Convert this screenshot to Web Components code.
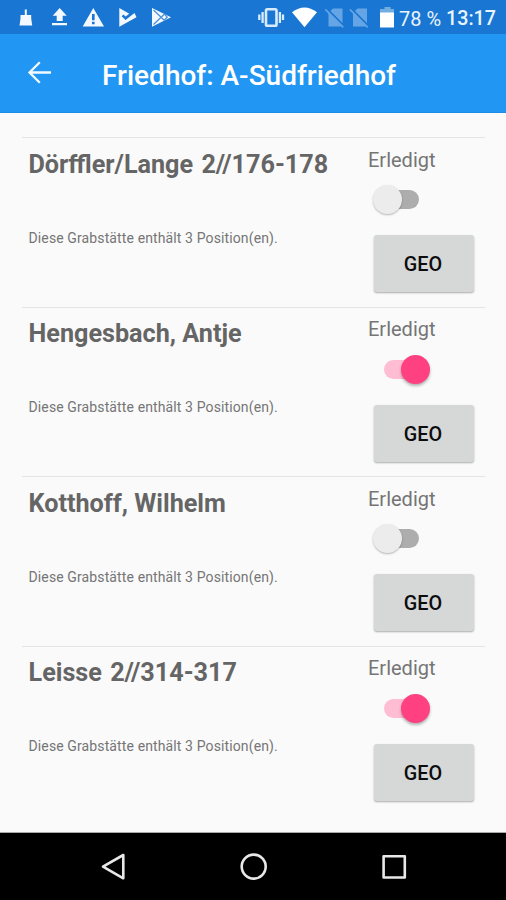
<!DOCTYPE html>
<html lang="de">
<head>
<meta charset="utf-8">
<title>Friedhof: A-Südfriedhof</title>
<style>
html, body { margin: 0; height: 100%; }
body { font-family: Roboto, "Liberation Sans", sans-serif; background: #fafafa; overflow: hidden; }
</style>
</head>
<body>
<grave-app></grave-app>
<script>
const define = (name, html, setup) => customElements.define(name, class extends HTMLElement {
  connectedCallback() {
    if (this.shadowRoot) return;
    const t = document.createElement('template');
    t.innerHTML = html;
    this.attachShadow({ mode: 'open' }).append(t.content.cloneNode(true));
    if (setup) setup(this, this.shadowRoot);
  }
});

define('status-bar', `
<style>
:host { display: flex; height: 34px; background: #1976d2; color: #e9f4ff; box-sizing: border-box; padding: 0 11px 0 0; justify-content: space-between; }
svg { display: block; flex: none; }
.right { display: flex; align-items: flex-start; font-size: 20px; line-height: 24px; white-space: pre; }
.pct { width: 47px; padding-top: 6.500px; }
.clock { font-weight: 500; font-size: 19.700px; width: 49px; padding-top: 6.500px; }
</style>
<svg width="180" height="34" viewBox="0 0 180 34" fill="#f3f9ff">
  <path d="M24.800 9.500h2V15h4.400v3.500l1 7h-12.700l1-7V15h4.300z"/>
  <path d="M59.700 8l7 7.700h-4V21h-6v-5.300h-4zM52 23h15v2.300H52z"/>
  <path fill-rule="evenodd" d="M93.300 8L104 26.500H82.700zM92 14v6.300h2.600v-6.300zM92 21.800V24.200h2.600v-2.400z"/>
  <path d="M119.300 8l10 5.700-3.800 2.800-2-2-1.800 1.800 3.800 3.800 9-7 2 4.200-17.200 9.400z"/>
  <path d="M152 8l19 9.200L152 26.700z"/>
  <path d="M153.500 10l11 10.500M153.500 24.500l11-10.500M164.500 14l2.700 3.200-2.700 2.800" fill="none" stroke="#4b91da" stroke-width="1.300"/>
</svg>
<div class="right">
<svg width="144" height="34" viewBox="255 0 144 34">
  <g fill="none" stroke="#d9ebff" stroke-width="2.300">
    <rect x="266" y="9.200" width="10.500" height="16.600" rx="1.300" stroke-width="2.600"/>
    <path d="M262.600 12v11M279.900 12v11M259.300 14.500v5.500M283 14.500v5.500"/>
  </g>
  <path fill="#fff" d="M292 12.300Q304.500 2.600 317 12.300L304.500 27.200z"/>
  <g fill="#65a5e5">
    <path d="M333 8.400h9.500V26.500h-14V13z"/><path d="M357.500 8.400h9.500V26.500h-14V13z"/>
  </g>
  <g fill="none" stroke="#1976d2" stroke-width="2"><path d="M326.500 8.500l18 18M351 8.500l18 18"/></g>
  <g fill="none" stroke="#65a5e5" stroke-width="1.600"><path d="M325.300 9.400l18 18M349.800 9.400l18 18"/></g>
  <path fill="#72addf" d="M384.500 7h6v2h3.500v4h-14V9h4.500z"/>
  <path fill="#fff" d="M380 12.500h14v15h-14z"/>
</svg>
<div class="pct">78 %</div><div class="clock">13:17</div>
</div>`);

define('app-bar', `
<style>
:host { display: flex; align-items: center; height: 79px; background: #2196f3; color: #fff; box-sizing: border-box; padding: 0 0 3px 27px; border-bottom: 1px solid #1c8be6; }
svg { display: block; margin-right: 50px; }
.title { font-size: 28px; font-weight: 500; line-height: 34px; padding-top: 8px; white-space: nowrap; }
</style>
<svg width="25" height="24" viewBox="0 0 25 24" fill="none" stroke="#f3faff" stroke-width="2.300"><path d="M24 12.500H2.500M12.800 2.200L2.500 12.500l10.300 10.300"/></svg>
<div class="title"><slot></slot></div>`);

define('toggle-switch', `
<style>
:host { display: grid; width: 58px; height: 30px; align-items: center; }
i { grid-area: 1/1; display: block; }
.track { width: 37px; height: 19px; border-radius: 10px; background: #adadad; margin-left: 9px; }
.thumb { width: 29px; height: 29px; border-radius: 50%; background: #ececec; box-shadow: 0 1px 2px rgba(0,0,0,.28); }
:host([checked]) .track { background: #ffbdd3; margin-left: 11px; }
:host([checked]) .thumb { background: #ff4081; margin-left: 28px; box-shadow: 0 2px 3px rgba(0,0,0,.3); }
</style>
<i class="track"></i><i class="thumb"></i>`);

define('geo-button', `
<style>
:host { display: flex; width: 100px; height: 57px; align-items: center; justify-content: center; background: #d6d7d7; border-radius: 3px; box-shadow: 0 1px 2px rgba(0,0,0,.32); color: #0c0c0c; font-size: 19.800px; font-weight: 500; }
span { padding: 2px 2px 0 0; }
</style>
<span><slot></slot></span>`);

define('grave-row', `
<style>
:host { display: flex; height: 169.500px; box-sizing: border-box; border-top: 1px solid #e4e4e4; padding: 0 0 0 7px; color: #656565; }
.main { width: 339px; white-space: nowrap; }
.name { font-size: 25.200px; font-weight: 700; line-height: 32px; padding-top: 10.500px; margin-left: -.5px; }
:host([plot]) .name { word-spacing: 2px; }
.note { font-size: 14px; letter-spacing: .12px; line-height: 20px; margin-top: 47px; margin-left: -.5px; color: #757575; }
.side { display: flex; flex-direction: column; }
.label { font-size: 20px; line-height: 26px; margin-top: 8.500px; color: #757575; }
toggle-switch { margin: 12px 0 0 5px; }
geo-button { margin: 20.500px 0 0 6px; }
</style>
<div class="main"><div class="name"><slot></slot></div><div class="note"><slot name="note"></slot></div></div>
<div class="side"><div class="label">Erledigt</div><toggle-switch></toggle-switch><geo-button>GEO</geo-button></div>`,
(el, root) => root.querySelector('toggle-switch').toggleAttribute('checked', el.hasAttribute('done')));

define('nav-bar', `
<style>
:host { display: flex; height: 67px; background: #000; align-items: center; justify-content: center; }
svg { display: block; }
</style>
<svg width="506" height="67" viewBox="0 833 506 67" fill="none" stroke="#e8e8e8" stroke-width="2.600" stroke-linejoin="round">
  <path d="M123.300 855v23.300L103 866.700z"/><circle cx="253.700" cy="866.600" r="12"/><rect x="383.600" y="856.300" width="21.200" height="21.200"/>
</svg>`);

define('grave-app', `
<style>
:host { display: flex; flex-direction: column; height: 900px; width: 506px; }
main { flex: 1; padding: 24px 21px 0 22px; overflow: hidden; box-sizing: border-box; border-bottom: 1px solid #a8a8a8; background: #fafafa; }
</style>
<status-bar></status-bar>
<app-bar>Friedhof: A-Südfriedhof</app-bar>
<main>
<grave-row plot>Dörffler/Lange 2//176-178<span slot="note">Diese Grabstätte enthält 3 Position(en).</span></grave-row>
<grave-row done>Hengesbach, Antje<span slot="note">Diese Grabstätte enthält 3 Position(en).</span></grave-row>
<grave-row>Kotthoff, Wilhelm<span slot="note">Diese Grabstätte enthält 3 Position(en).</span></grave-row>
<grave-row plot done>Leisse 2//314-317<span slot="note">Diese Grabstätte enthält 3 Position(en).</span></grave-row>
</main>
<nav-bar></nav-bar>`);
</script>
</body>
</html>
